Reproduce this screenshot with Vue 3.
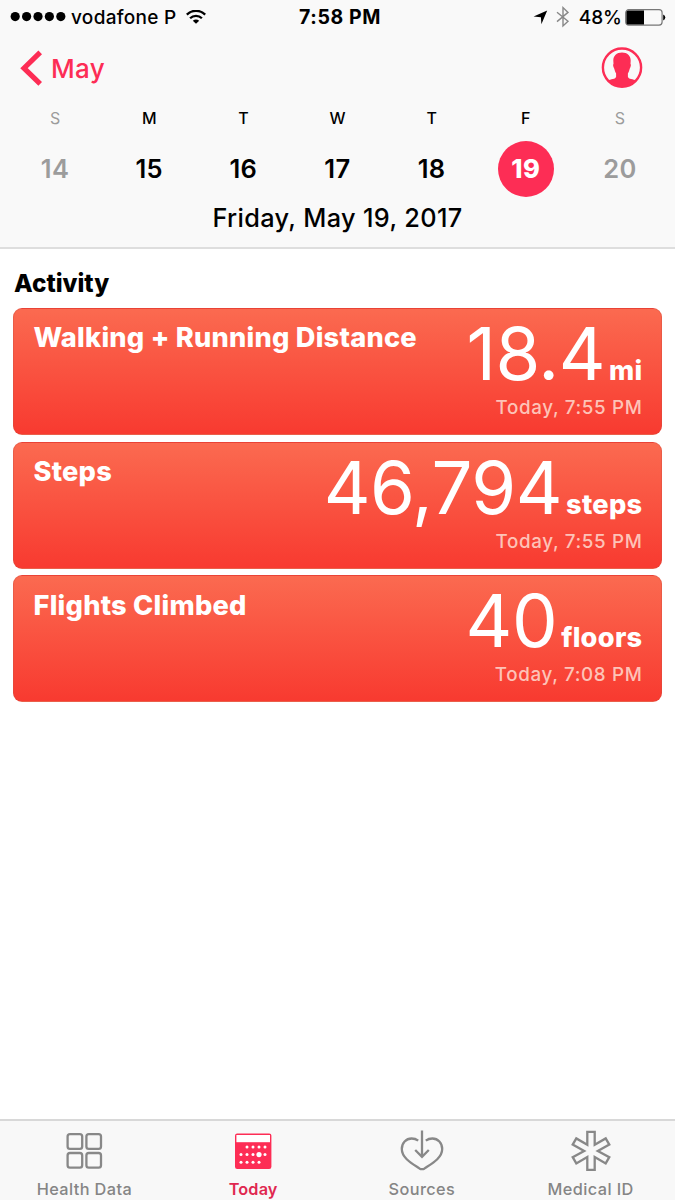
<template>
  <div class="page">
    <header class="header">
      <div class="status">
        <div class="carrier">
          <svg class="signal" width="56" height="12" viewBox="0 0 56 12">
            <circle v-for="i in 5" :key="i" :cx="5.2 + (i - 1) * 11.4" cy="5.6" r="4.6" />
          </svg>
          <span class="carrier-name">vodafone P</span>
          <svg class="wifi" width="20" height="15" viewBox="0 0 20 15">
            <path d="M0.8 4.6A13 13 0 0 1 19.2 4.6" />
            <path d="M4.1 8.2A8.4 8.4 0 0 1 15.9 8.2" />
            <path class="fill" d="M6.8 10.8A5 5 0 0 1 13.2 10.8L10 13.8Z" />
          </svg>
        </div>
        <span class="clock">7:58 PM</span>
        <div class="battery-info">
          <svg class="location" width="15" height="15" viewBox="0 0 15 15">
            <path d="M14.2 0.5L8.4 14.2L7.9 7.2L0.6 6.6Z" />
          </svg>
          <svg class="bluetooth" width="14" height="22" viewBox="0 0 14 22">
            <path d="M1 6.2L12 15.3L7 20V1.6L12 6.4L1 15.6" />
          </svg>
          <span class="percent">48%</span>
          <svg class="battery" width="41" height="17" viewBox="0 0 41 17">
            <rect class="shell" x="0.7" y="0.7" width="36.4" height="15.4" rx="3" />
            <path d="M3 1.4H19V15.4H3Q1.4 15.4 1.4 13.8V3Q1.4 1.4 3 1.4Z" />
            <path d="M38.2 5.5Q40.3 6.4 40.3 8.5Q40.3 10.6 38.2 11.5Z" />
          </svg>
        </div>
      </div>
      <div class="nav">
        <div class="back">
          <svg width="22" height="36" viewBox="0 0 22 36">
            <path d="M20.2 2.4L4 18.2L20.2 33.8" />
          </svg>
          <span>May</span>
        </div>
        <svg class="avatar" width="42" height="42" viewBox="0 0 42 42">
          <circle cx="21" cy="20.6" r="19.1" />
          <path
            d="M21 5.4C26.4 5.4 29.7 8.8 29.7 13.4L29.5 17C30.2 17.2 30 19.6 28.8 21.4C28.2 23.8 27.6 25.2 26.9 26.4V29.8C27.4 32.4 32 32 35.8 33.6C31.5 38 26.5 39.6 21 39.6S10.5 38 6.2 33.6C10 32 14.6 32.4 15.1 29.8V26.4C14.4 25.2 13.8 23.8 13.2 21.4C12 19.6 11.8 17.2 12.5 17L12.3 13.4C12.3 8.8 15.6 5.4 21 5.4Z"
          />
        </svg>
      </div>
      <div class="week">
        <div v-for="day in days" :key="day.date" class="day" :class="{ weekend: day.weekend, selected: day.date === 19 }">
          <span class="letter">{{ day.letter }}</span>
          <span class="date">{{ day.date }}</span>
        </div>
      </div>
      <div class="full-date">Friday, May 19, 2017</div>
    </header>

    <main class="content">
      <h2>Activity</h2>
      <div v-for="card in cards" :key="card.title" class="card">
        <span class="card-title">{{ card.title }}</span>
        <div class="reading">
          <div class="amount">
            <span class="value">{{ card.value }}</span>
            <span class="unit">{{ card.unit }}</span>
          </div>
          <span class="time">{{ card.time }}</span>
        </div>
      </div>
    </main>

    <nav class="tabs">
      <div class="tab">
        <svg width="42" height="42" viewBox="0 0 42 42">
          <rect x="4.6" y="4.2" width="14.6" height="14.6" rx="2.4" />
          <rect x="23.4" y="4.2" width="14.6" height="14.6" rx="2.4" />
          <rect x="4.6" y="23" width="14.6" height="14.6" rx="2.4" />
          <rect x="23.4" y="23" width="14.6" height="14.6" rx="2.4" />
        </svg>
        <span>Health Data</span>
      </div>
      <div class="tab active">
        <svg width="42" height="42" viewBox="0 0 42 42">
          <rect class="sheet" x="3" y="3.6" width="36.4" height="35.4" rx="2.2" />
          <rect class="dot" x="4.4" y="5" width="33.6" height="7.2" />
          <circle v-for="(dot, i) in dots" :key="i" class="dot" :cx="dot[0]" :cy="dot[1]" :r="dot[2]" />
        </svg>
        <span>Today</span>
      </div>
      <div class="tab">
        <svg width="44" height="42" viewBox="0 0 44 42">
          <path
            d="M18.2 10.6C15.8 8.8 13.6 8.5 11.6 8.5C6 8.5 1.8 13 1.8 19C1.8 28 12 33.5 19.4 38.4Q22 40 24.6 38.4C32 33.5 42.2 28 42.2 19C42.2 13 38 8.5 32.4 8.5C30.4 8.5 28.2 8.8 25.8 10.6"
          />
          <path d="M22 0.6V26.4M15.2 20L22 26.8L28.8 20" />
        </svg>
        <span>Sources</span>
      </div>
      <div class="tab">
        <svg width="42" height="42" viewBox="0 0 42 42">
          <path
            d="M17.3 1.9H24.7V14.8L35.7 8.4L39.3 14.6L27.8 20.9L39.3 27.2L35.7 33.4L24.7 27V39.9H17.3V27L6.3 33.4L2.7 27.2L14.2 20.9L2.7 14.6L6.3 8.4L17.3 14.8Z"
          />
        </svg>
        <span>Medical ID</span>
      </div>
    </nav>
  </div>
</template>

<script setup>
const days = [
  { letter: "S", date: 14, weekend: true },
  { letter: "M", date: 15 },
  { letter: "T", date: 16 },
  { letter: "W", date: 17 },
  { letter: "T", date: 18 },
  { letter: "F", date: 19 },
  { letter: "S", date: 20, weekend: true },
];

const cards = [
  { title: "Walking + Running Distance", value: "18.4", unit: "mi", time: "Today, 7:55 PM" },
  { title: "Steps", value: "46,794", unit: "steps", time: "Today, 7:55 PM" },
  { title: "Flights Climbed", value: "40", unit: "floors", time: "Today, 7:08 PM" },
];

// x, y, radius inside the calendar icon
const dots = [
  [15, 17, 1.5],
  [21, 17, 1.5],
  [27, 17, 1.5],
  [33, 17, 1.5],
  [9, 24.6, 1.5],
  [15, 24.6, 1.5],
  [21, 24.6, 1.5],
  [27, 24.6, 2.6],
  [33, 24.6, 1.5],
  [9, 32.2, 1.5],
  [15, 32.2, 1.5],
  [21, 32.2, 1.5],
  [27, 32.2, 1.5],
];
</script>

<style>
body {
  background: #fff;
}
</style>

<style scoped>
.page {
  display: flex;
  flex-direction: column;
  width: 675px;
  height: 1200px;
  overflow: hidden;
  color: #000;
  background: #fff;
  font-family: Inter, "Liberation Sans", sans-serif;
}

.page svg {
  display: block;
  flex: none;
}

.page span {
  white-space: nowrap;
}

.header {
  box-sizing: border-box;
  flex: none;
  height: 249px;
  background: #f9f9f9;
  border-bottom: 2px solid #dedede;
}

.status {
  display: grid;
  grid-template-columns: 1fr auto 1fr;
  align-items: center;
  height: 34px;
  padding: 0 9px 0 10px;
  font-size: 19px;
  font-weight: 500;
}

.carrier,
.battery-info {
  display: flex;
  align-items: center;
}

.carrier-name {
  margin-left: 5px;
  letter-spacing: 0.3px;
}

.wifi {
  margin-left: 9px;
  fill: none;
  stroke: #000;
  stroke-width: 2.3;
}

.wifi .fill {
  fill: #000;
  stroke: none;
}

.clock {
  padding-left: 4px;
  font-size: 19.5px;
  font-weight: 700;
  letter-spacing: 0.6px;
}

.battery-info {
  justify-content: flex-end;
}

.bluetooth {
  margin: 0 9px 0 8px;
  fill: none;
  stroke: #888;
  stroke-width: 1.4;
}

.battery {
  margin-left: 3px;
}

.battery .shell {
  fill: none;
  stroke: #777;
  stroke-width: 1.2;
}

.nav {
  display: flex;
  justify-content: space-between;
  align-items: center;
  height: 68px;
  padding: 0 32px 0 20px;
  color: #fd2d55;
}

.back {
  display: flex;
  align-items: center;
  gap: 9px;
  font-size: 26px;
  font-weight: 500;
  letter-spacing: 0.3px;
}

.back path {
  fill: none;
  stroke: #fd2d55;
  stroke-width: 5.2;
}

.avatar circle {
  fill: none;
  stroke: #fd2d55;
  stroke-width: 2.4;
}

.avatar path {
  fill: #fd2d55;
}

.week {
  display: grid;
  grid-template-columns: repeat(7, 1fr);
  padding: 6px 8px 0;
}

.day {
  display: flex;
  flex-direction: column;
  align-items: center;
}

.letter {
  height: 20px;
  line-height: 20px;
  font-size: 16px;
  font-weight: 500;
}

.date {
  width: 56px;
  height: 56px;
  margin-top: 13px;
  line-height: 55px;
  border-radius: 50%;
  text-align: center;
  font-size: 25.5px;
  font-weight: 600;
  letter-spacing: 0.4px;
}

.weekend {
  color: #9c9c9c;
}

.weekend .letter {
  font-weight: 400;
}

.selected .date {
  color: #fff;
  background: #fd2d55;
  font-weight: 800;
}

.full-date {
  margin-top: 5px;
  line-height: 32px;
  text-align: center;
  font-size: 25.3px;
  font-weight: 500;
  letter-spacing: 0.35px;
}

.content {
  display: flex;
  flex: 1;
  flex-direction: column;
  gap: 6.6px;
  padding: 19px 13px 0;
}

h2 {
  margin: 0 0 2.4px 1px;
  line-height: 31px;
  font-size: 24.3px;
  font-weight: 800;
}

.card {
  box-sizing: border-box;
  display: flex;
  justify-content: space-between;
  height: 127px;
  padding: 0 18.5px 0 19.5px;
  color: #fff;
  background: linear-gradient(#fb6a50, #f83a30);
  border: 1px solid rgba(210, 80, 65, 0.4);
  border-radius: 9px;
}

.card-title {
  padding-top: 13.5px;
  line-height: 32px;
  font-size: 27.2px;
  font-weight: 800;
  letter-spacing: 0.24px;
}

.reading {
  display: flex;
  flex-direction: column;
  align-items: flex-end;
}

.amount {
  display: flex;
  align-items: baseline;
  height: 86px;
  line-height: 90px;
}

.value {
  font-size: 72.5px;
  font-weight: 400;
  letter-spacing: -0.5px;
}

.unit {
  margin-left: 4px;
  font-size: 27.2px;
  font-weight: 800;
  letter-spacing: 0.3px;
}

.time {
  line-height: 25px;
  color: #fdc3b8;
  font-size: 18.8px;
  font-weight: 500;
  letter-spacing: 0.65px;
}

.tabs {
  box-sizing: border-box;
  display: grid;
  grid-template-columns: repeat(4, 1fr);
  flex: none;
  height: 81px;
  background: #f8f8f8;
  border-top: 2px solid #d8d8d8;
}

.tab {
  display: flex;
  flex-direction: column;
  align-items: center;
  padding-top: 9px;
  color: #858585;
  font-size: 16.3px;
  font-weight: 500;
  line-height: 20px;
  letter-spacing: 0.4px;
}

.tab svg {
  fill: none;
  stroke: #888;
  stroke-width: 2.3;
}

.tab span {
  margin-top: 7px;
}

.active {
  color: #e02850;
  font-weight: 600;
  letter-spacing: 0.15px;
}

.tab .sheet {
  fill: #fd2d55;
  stroke: none;
}

.tab .dot {
  fill: #fff;
  stroke: none;
}
</style>
